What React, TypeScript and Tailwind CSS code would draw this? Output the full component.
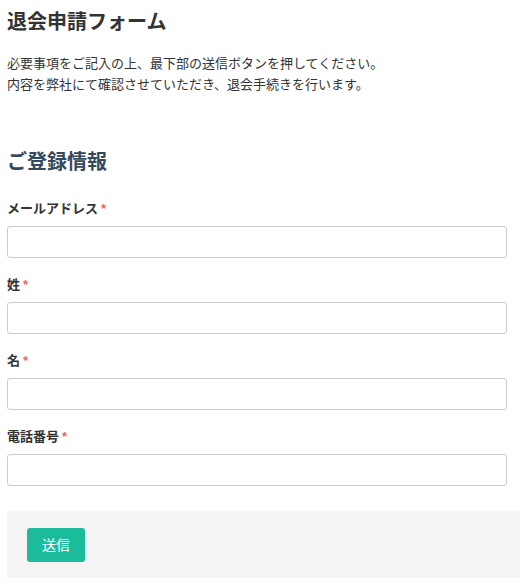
const fields = ['メールアドレス', '姓', '名', '電話番号'];

export default function App() {
  return (
    <div
      className="bg-white pl-[7px] pt-[7px] text-[#333]"
      style={{ fontFamily: '"Liberation Sans", "Noto Sans CJK JP", sans-serif' }}
    >
      <h1 className="text-[20px] font-bold leading-[30px]">退会申請フォーム</h1>
      <p className="mt-[16px] text-[13px] leading-[21px]">
        必要事項をご記入の上、最下部の送信ボタンを押してください。
        <br />
        内容を弊社にて確認させていただき、退会手続きを行います。
      </p>

      <h2 className="mt-[52px] text-[20px] font-bold leading-[30px] text-[#34495e]">ご登録情報</h2>

      <form className="mt-[22px]" onSubmit={(e) => e.preventDefault()}>
        {fields.map((f, i) => (
          <div key={f} className={i > 0 ? 'mt-[17px]' : ''}>
            <label className="block text-[13px] font-bold leading-[20px]">
              {f}
              <span className="ml-[3px] text-[#f06464]">*</span>
            </label>
            <input
              type="text"
              className="mt-[7px] block h-[32px] w-[500px] rounded-[3px] border border-[#ccc] bg-white px-2 text-[13px] outline-none"
            />
          </div>
        ))}

        <div className="mt-[25px] h-[67px] bg-[#f5f5f5] pl-[20px] pt-[17px]">
          <button
            type="submit"
            className="h-[34px] w-[58px] rounded-[3px] bg-[#1abc9c] text-[14px] text-white"
          >
            送信
          </button>
        </div>
      </form>
    </div>
  );
}
